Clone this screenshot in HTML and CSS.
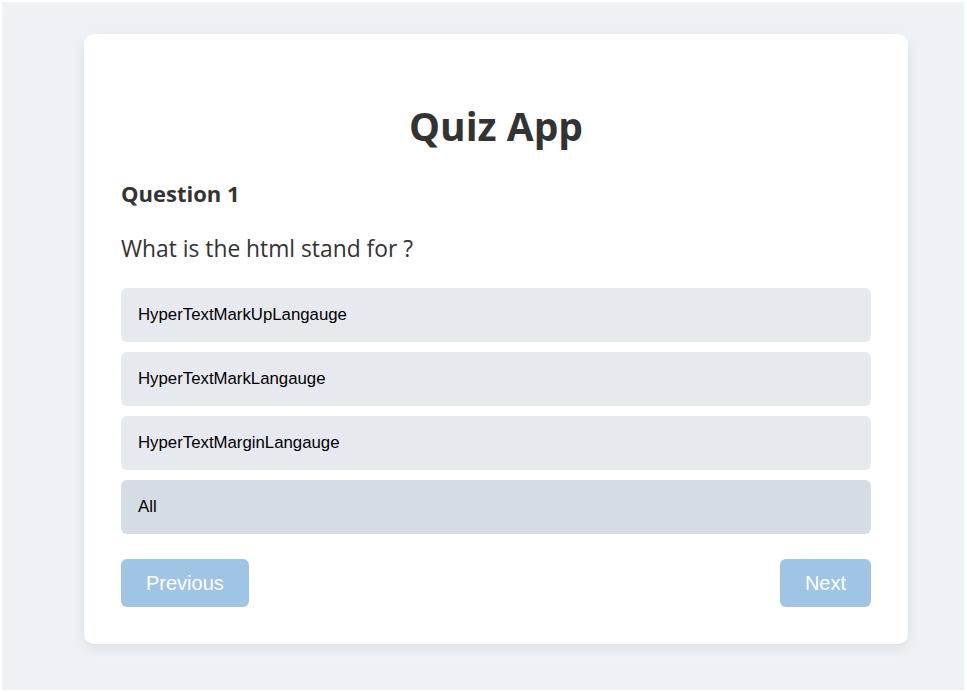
FILE: index.html
```html
<!DOCTYPE html>
<html lang="en">
<head>
<meta charset="utf-8">
<title>Quiz App</title>
<link rel="stylesheet" href="styles.css">
</head>
<body>
<div class="page">
  <div class="card">
    <h1 class="title">Quiz App</h1>
    <h3 class="q-num">Question 1</h3>
    <p class="q-text">What is the html stand for ?</p>
    <div class="options">
      <button class="option">HyperTextMarkUpLangauge</button>
      <button class="option">HyperTextMarkLangauge</button>
      <button class="option">HyperTextMarginLangauge</button>
      <button class="option option-active">All</button>
    </div>
    <div class="nav">
      <button class="nav-btn">Previous</button>
      <button class="nav-btn">Next</button>
    </div>
  </div>
</div>
</body>
</html>
```

FILE: styles.css
```css
html {
  background: #ffffff;
  height: 100%;
}
body {
  margin: 0;
  padding: 2px 3px 2px 2px;
  height: 100%;
  box-sizing: border-box;
  font-family: "Open Sans", "Noto Sans", sans-serif;
  color: #333333;
}
.page {
  background: #eef2f7;
  height: 100%;
  padding-top: 32px;
  box-sizing: border-box;
}
.card {
  width: 750px;
  margin: 0 auto 0 82px;
  background: #ffffff;
  border-radius: 10px;
  box-shadow: 0 4px 14px rgba(0, 0, 0, 0.08);
  padding: 65px 37px 37px;
  display: flex;
  flex-direction: column;
}
.title {
  margin: 0 0 26px;
  text-align: center;
  font-size: 39px;
  font-weight: 700;
  line-height: 54px;
}
.q-num {
  margin: 0 0 27px;
  font-size: 22px;
  font-weight: 700;
  line-height: 28px;
}
.q-text {
  margin: 0 0 24px;
  font-size: 22.8px;
  line-height: 30px;
}
.options {
  display: flex;
  flex-direction: column;
  gap: 10px;
}
.option {
  height: 54px;
  border: none;
  border-radius: 6px;
  background: #e6eaef;
  text-align: left;
  padding: 0 17px;
  font-family: "Liberation Sans", Arial, sans-serif;
  font-size: 16.8px;
  color: #000000;
}
.option-active {
  background: #d6dce4;
}
.nav {
  display: flex;
  justify-content: space-between;
  margin-top: 25px;
}
.nav-btn {
  height: 48px;
  border: none;
  border-radius: 6px;
  background: #a0c4e4;
  color: #ffffff;
  font-family: "Liberation Sans", Arial, sans-serif;
  font-size: 20px;
  padding: 0 25px;
}
```
